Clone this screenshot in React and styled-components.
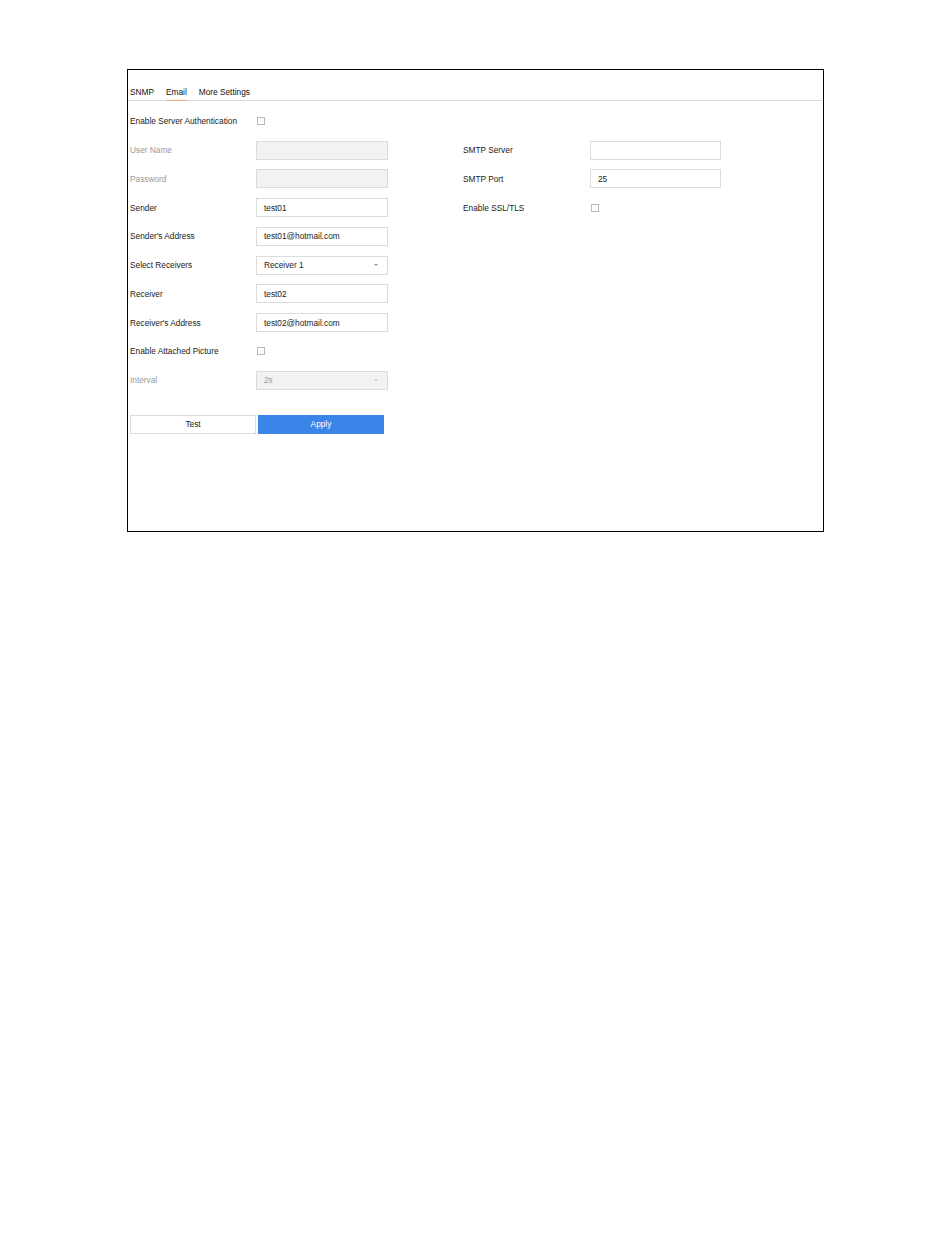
import styled, { createGlobalStyle } from "styled-components";

const rowHeight = "28.75px";

const GlobalStyle = createGlobalStyle`
  html, body {
    margin: 0;
    padding: 0;
    background: #fff;
  }
  body {
    font-family: "Liberation Sans", Arial, sans-serif;
    font-size: 8.3px;
    color: #222;
  }
`;

const Page = styled.div`
  width: 950px;
  min-height: 1241px;
  padding: 69px 0 0 127px;
  box-sizing: border-box;
`;

const Frame = styled.div`
  width: 697px;
  height: 463px;
  box-sizing: border-box;
  border: 1.4px solid #000;
  display: flex;
  flex-direction: column;
`;

const TabBar = styled.div`
  height: 30px;
  margin-right: 1px;
  padding-left: 2px;
  display: flex;
  align-items: flex-end;
  gap: 12px;
  border-bottom: 1px solid #d9d9d9;
`;

const Tab = styled.div`
  padding-bottom: 3px;
  margin-bottom: -1px;
  line-height: 10px;
  color: #111;
  border-bottom: 1.5px solid ${(p) => (p.active ? "#f2a678" : "transparent")};
`;

const Body = styled.div`
  padding: 6px 0 0 2px;
  display: flex;
  flex-direction: column;
`;

const Columns = styled.div`
  display: flex;
  gap: 75px;
`;

const Column = styled.div`
  width: ${(p) => p.width};
  padding-top: ${(p) => (p.offset ? rowHeight : "0")};
  display: flex;
  flex-direction: column;
`;

const Row = styled.div`
  height: ${rowHeight};
  display: flex;
  align-items: center;
`;

const Label = styled.div`
  width: ${(p) => p.width || "126px"};
  flex-shrink: 0;
  color: ${(p) => (p.disabled ? "#9a9a9a" : "#222")};
`;

const Field = styled.div`
  width: ${(p) => p.width || "132px"};
  height: 19px;
  box-sizing: border-box;
  border: 1px solid #dcdcdc;
  background: ${(p) => (p.disabled ? "#f2f2f2" : "#fff")};
  color: ${(p) => (p.disabled ? "#9a9a9a" : "#222")};
  padding: 0 7px;
  display: flex;
  align-items: center;
  justify-content: space-between;
`;

const Caret = styled.span`
  width: 0;
  height: 0;
  border-left: 2px solid transparent;
  border-right: 2px solid transparent;
  border-top: 2.5px solid ${(p) => (p.disabled ? "#c8c8c8" : "#999")};
  margin-right: 2px;
`;

const Check = styled.span`
  width: 8px;
  height: 8px;
  margin-left: 1px;
  box-sizing: border-box;
  border: 1px solid #b8b8b8;
  background: #fff;
`;

const Buttons = styled.div`
  margin-top: 20px;
  display: flex;
  gap: 2px;
`;

const Button = styled.div`
  width: 126px;
  height: 19px;
  box-sizing: border-box;
  display: flex;
  align-items: center;
  justify-content: center;
  border: 1px solid ${(p) => (p.primary ? "#3a86e8" : "#dcdcdc")};
  background: ${(p) => (p.primary ? "#3a86e8" : "#fff")};
  color: ${(p) => (p.primary ? "#fff" : "#222")};
`;

const leftRows = [
  { label: "Enable Server Authentication", type: "check" },
  { label: "User Name", type: "input", value: "", disabled: true },
  { label: "Password", type: "input", value: "", disabled: true },
  { label: "Sender", type: "input", value: "test01" },
  { label: "Sender's Address", type: "input", value: "test01@hotmail.com" },
  { label: "Select Receivers", type: "select", value: "Receiver 1" },
  { label: "Receiver", type: "input", value: "test02" },
  { label: "Receiver's Address", type: "input", value: "test02@hotmail.com" },
  { label: "Enable Attached Picture", type: "check" },
  { label: "Interval", type: "select", value: "2s", disabled: true },
];

const rightRows = [
  { label: "SMTP Server", type: "input", value: "" },
  { label: "SMTP Port", type: "input", value: "25" },
  { label: "Enable SSL/TLS", type: "check" },
];

const FormRow = ({ row, labelWidth, fieldWidth }) => (
  <Row>
    <Label width={labelWidth} disabled={row.disabled}>
      {row.label}
    </Label>
    {row.type === "check" ? (
      <Check />
    ) : (
      <Field width={fieldWidth} disabled={row.disabled}>
        <span>{row.value}</span>
        {row.type === "select" && <Caret disabled={row.disabled} />}
      </Field>
    )}
  </Row>
);

const App = () => (
  <>
    <GlobalStyle />
    <Page>
      <Frame>
        <TabBar>
          <Tab>SNMP</Tab>
          <Tab active>Email</Tab>
          <Tab>More Settings</Tab>
        </TabBar>
        <Body>
          <Columns>
            <Column width="258px">
              {leftRows.map((row) => (
                <FormRow key={row.label} row={row} />
              ))}
            </Column>
            <Column width="258px" offset>
              {rightRows.map((row) => (
                <FormRow
                  key={row.label}
                  row={row}
                  labelWidth="127px"
                  fieldWidth="131px"
                />
              ))}
            </Column>
          </Columns>
          <Buttons>
            <Button>Test</Button>
            <Button primary>Apply</Button>
          </Buttons>
        </Body>
      </Frame>
    </Page>
  </>
);

export default App;
